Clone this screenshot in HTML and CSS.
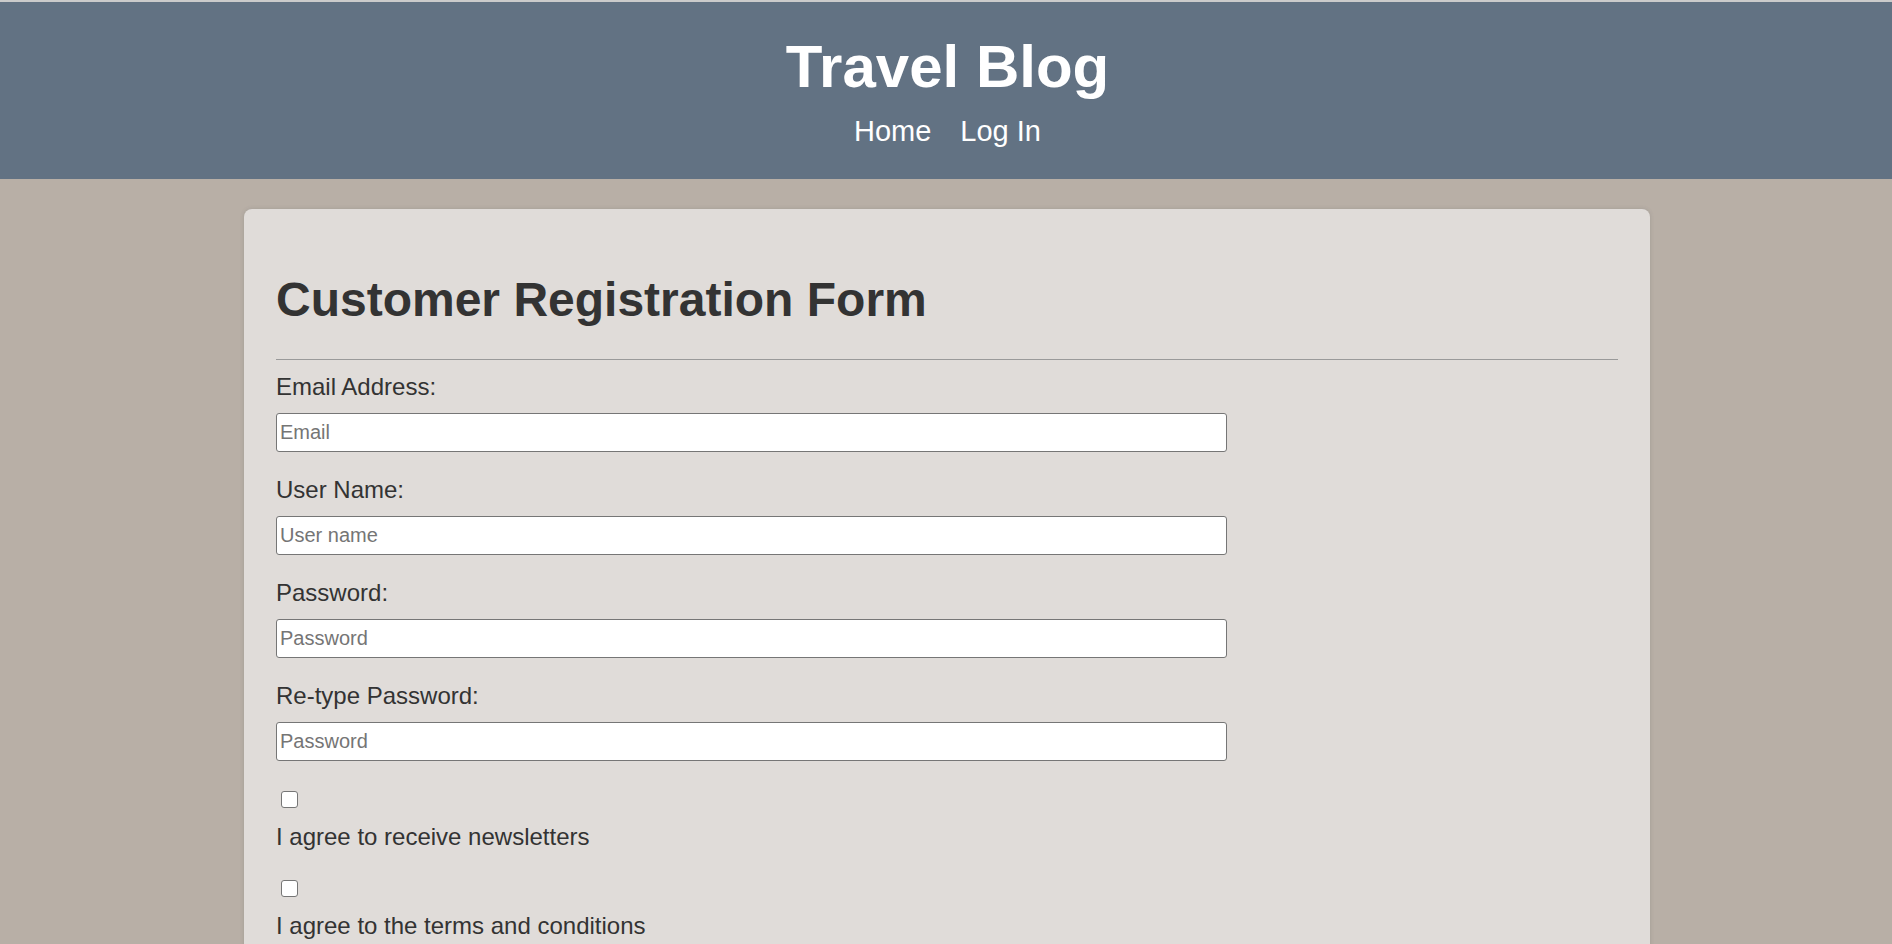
FILE: index.html
```html
<!DOCTYPE html>
<html lang="en">
<head>
<meta charset="utf-8">
<title>Travel Blog - Customer Registration</title>
<link rel="stylesheet" href="styles.css">
</head>
<body>
  <header class="site-header">
    <h1 class="site-title">Travel Blog</h1>
    <nav class="site-nav">
      <a href="#" class="nav-link">Home</a>
      <a href="#" class="nav-link">Log In</a>
    </nav>
  </header>
  <main class="page">
    <section class="card">
      <h2 class="card-title">Customer Registration Form</h2>
      <hr class="divider">
      <form class="form">
        <div class="field">
          <label class="field-label" for="email">Email Address:</label>
          <input class="field-input" id="email" type="email" placeholder="Email">
        </div>
        <div class="field">
          <label class="field-label" for="username">User Name:</label>
          <input class="field-input" id="username" type="text" placeholder="User name">
        </div>
        <div class="field">
          <label class="field-label" for="password">Password:</label>
          <input class="field-input" id="password" type="password" placeholder="Password">
        </div>
        <div class="field field-last">
          <label class="field-label" for="password2">Re-type Password:</label>
          <input class="field-input" id="password2" type="password" placeholder="Password">
        </div>
        <div class="check">
          <input class="check-box" id="newsletter" type="checkbox">
          <label class="check-label" for="newsletter">I agree to receive newsletters</label>
        </div>
        <div class="check">
          <input class="check-box" id="terms" type="checkbox">
          <label class="check-label" for="terms">I agree to the terms and conditions</label>
        </div>
      </form>
    </section>
  </main>
</body>
</html>
```

FILE: styles.css
```css
html, body {
  margin: 0;
  padding: 0;
}

body {
  background: #b8afa6;
  border-top: 2px solid #cbcbcb;
  font-family: "Liberation Sans", Arial, sans-serif;
  color: #333333;
  min-height: 942px;
  padding-left: 2px;
}

.site-header {
  background: #627283;
  text-align: center;
  padding: 30px 0 31px;
  margin-left: -2px;
  padding-left: 3px;
}

.site-title {
  margin: 0;
  font-size: 60px;
  line-height: 69px;
  font-weight: bold;
  color: #ffffff;
}

.site-nav {
  margin-top: 14px;
  display: flex;
  justify-content: center;
  gap: 29px;
}

.nav-link {
  color: #ffffff;
  text-decoration: none;
  font-size: 29px;
  line-height: 33px;
}

.page {
  padding-top: 30px;
}

.card {
  width: 1406px;
  box-sizing: border-box;
  margin: 0 auto;
  background: #e0dcd9;
  border-radius: 8px;
  padding: 32px 32px 40px;
  box-shadow: 0 0 4px rgba(60, 70, 80, 0.18);
}

.card-title {
  margin: 31px 0 32px;
  font-size: 48px;
  line-height: 55px;
  font-weight: bold;
  color: #333333;
}

.divider {
  margin: 0;
  border: 0;
  height: 1px;
  background: #9a9a9a;
}

.form {
  padding-top: 11px;
}

.field {
  margin-bottom: 22px;
}

.field-last {
  margin-bottom: 30px;
}

.field-label {
  display: block;
  font-size: 24px;
  line-height: 28px;
  padding-top: 2px;
  margin-bottom: 12px;
  color: #333333;
}

.field-input {
  display: block;
  box-sizing: border-box;
  width: 951px;
  height: 39px;
  margin: 0;
  padding: 0 3px;
  border: 1px solid #767676;
  border-radius: 3px;
  background: #ffffff;
  font-family: "Liberation Sans", Arial, sans-serif;
  font-size: 20px;
  color: #333333;
}

.field-input::placeholder {
  color: #757575;
}

.check {
  margin-bottom: 29px;
}

.check-box {
  display: block;
  appearance: none;
  -webkit-appearance: none;
  box-sizing: border-box;
  width: 17px;
  height: 17px;
  margin: 0 0 15px 5px;
  border: 1px solid #767676;
  border-radius: 3px;
  background: #ffffff;
}

.check-label {
  display: block;
  font-size: 24px;
  line-height: 28px;
  color: #333333;
}
```
